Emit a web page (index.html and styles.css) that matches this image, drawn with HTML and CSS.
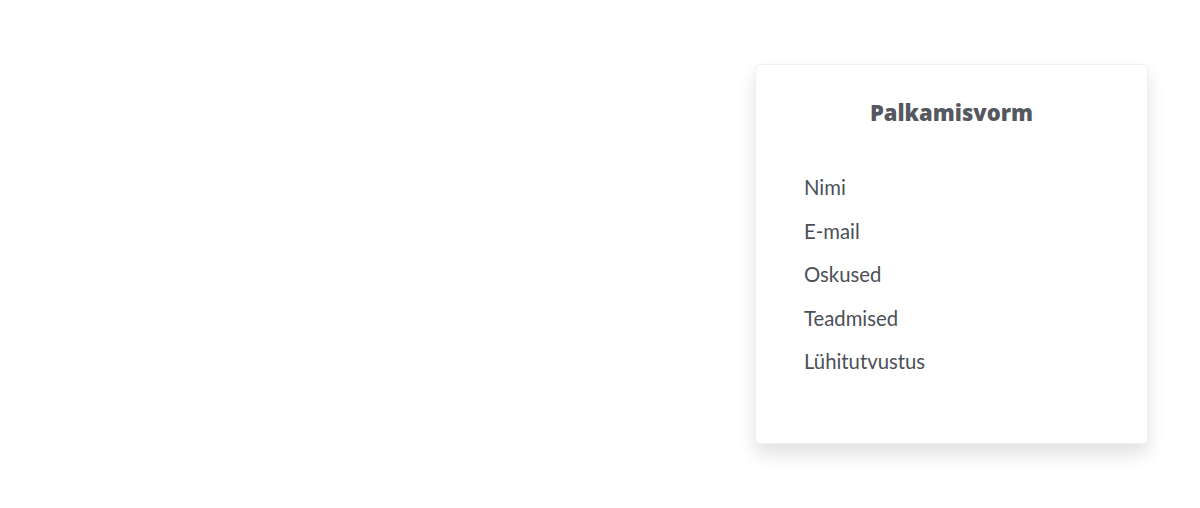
FILE: index.html
```html
<!DOCTYPE html>
<html lang="et">
<head>
<meta charset="utf-8">
<title>Palkamisvorm</title>
<link rel="stylesheet" href="styles.css">
</head>
<body>
<main class="page">
  <section class="card">
    <h2 class="card-title">Palkamisvorm</h2>
    <ul class="fields">
      <li class="field">Nimi</li>
      <li class="field">E-mail</li>
      <li class="field">Oskused</li>
      <li class="field">Teadmised</li>
      <li class="field">Lühitutvustus</li>
    </ul>
  </section>
</main>
</body>
</html>
```
FILE: styles.css
```css
html, body {
  margin: 0;
  padding: 0;
  background: #ffffff;
}
.page {
  display: flex;
  justify-content: flex-end;
  padding: 64px 52px 40px 0;
}
.card {
  box-sizing: border-box;
  width: 393px;
  height: 380px;
  border: 1px solid #f0f0f0;
  border-radius: 5px;
  background: #fff;
  box-shadow: 0 10px 18px rgba(0, 0, 0, 0.12);
  padding: 30px 48px 0 48px;
}
.card-title {
  margin: 0;
  text-align: center;
  font-family: "Open Sans", "DejaVu Sans", sans-serif;
  font-weight: 800;
  font-size: 22px;
  line-height: 34px;
  color: #55595f;
}
.fields {
  list-style: none;
  margin: 37px 0 0 0;
  padding: 0;
}
.field {
  font-family: "Lato", "Open Sans", sans-serif;
  font-size: 20.3px;
  line-height: 43.6px;
  color: #4b5057;
}
```
